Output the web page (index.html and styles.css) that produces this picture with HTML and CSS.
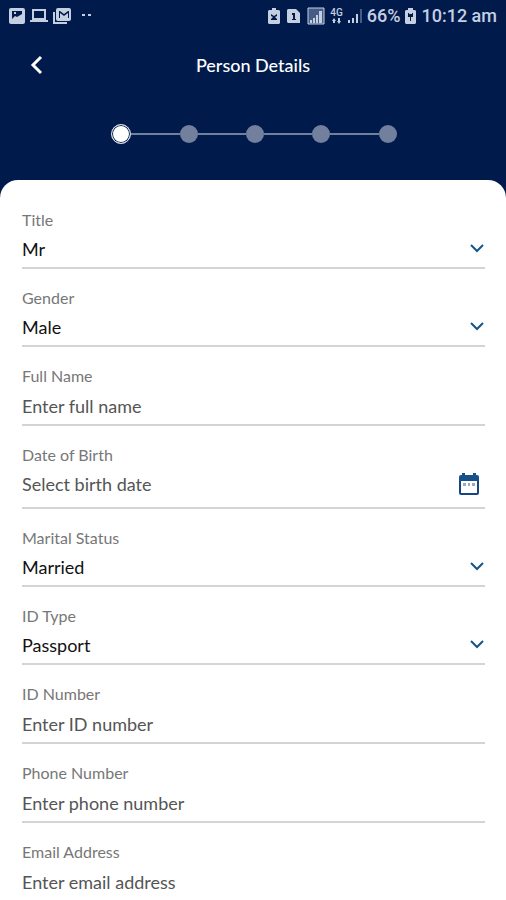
FILE: index.html
```html
<!DOCTYPE html>
<html lang="en">
<head>
<meta charset="utf-8">
<meta name="viewport" content="width=device-width, initial-scale=1">
<title>Person Details</title>
<link rel="stylesheet" href="styles.css">
</head>
<body>
<header class="top">
  <div class="status">
    <div class="status-group notices">
      <svg width="16" height="16" viewBox="0 0 16 16"><path fill="currentColor" fill-rule="evenodd" d="M2 0h12a2 2 0 0 1 2 2v12a2 2 0 0 1-2 2H2a2 2 0 0 1-2-2V2a2 2 0 0 1 2-2zM3 3v8l3-3 2 1 5-3V3zM5 4h2v2H5z"/></svg>
      <svg width="18" height="16" viewBox="0 0 18 16"><path fill="none" stroke="currentColor" stroke-width="2" d="M3 11V2h12v9zM0 13h18"/></svg>
      <svg width="18" height="16" viewBox="0 0 18 16"><path fill="none" stroke="currentColor" stroke-width="2" d="M1 4v11h13"/><path fill="currentColor" fill-rule="evenodd" d="M5 0h11a2 2 0 0 1 2 2v9a2 2 0 0 1-2 2H5a2 2 0 0 1-2-2V2a2 2 0 0 1 2-2zM6 3v7h1V5l4 3 4-3v5h1V3h-1l-4 3-4-3z"/></svg>
      <svg class="dots" width="12" height="16" viewBox="0 0 12 16"><path fill="currentColor" d="M0 6h3v2H0zM6 6h3v2H6z"/></svg>
    </div>
    <div class="status-group">
      <svg width="12" height="16" viewBox="0 0 12 16"><path fill="currentColor" fill-rule="evenodd" d="M4 0h4v2h3l1 1v12l-1 1H1l-1-1V3l1-1h3zM3 6v2l2 1-2 2v1h6v-1L7 9l2-1V6L6 8z"/></svg>
      <svg class="sim" width="13" height="16" viewBox="0 0 13 16"><path fill="currentColor" fill-rule="evenodd" d="M1 1h8l4 4v10H1l-1-1V2zM5 5v2h1v4H5v1h4v-1H8V5z"/></svg>
      <svg width="18" height="18" viewBox="0 0 18 18"><path fill="#465b86" stroke="currentColor" stroke-width="1" d="M1 1h16v16H1z"/><path fill="currentColor" d="M3 13h2v3H3zM6 11h2v5H6zM9 8h2v8H9zM12 4h3v12h-3z"/></svg>
      <span class="network"><span>4G</span><svg width="10" height="6" viewBox="0 0 10 6"><path fill="currentColor" d="M0 3l2-3 2 3H3v2H1V3zM5 3h1V0h2v3h1L7 6z"/></svg></span>
      <svg class="signal" width="14" height="16" viewBox="0 0 14 16"><path fill="currentColor" d="M0 12h2v3H0zM4 10h2v5H4zM8 6h2v9H8z"/><path fill="#465b86" d="M12 1h2v14h-2z"/></svg>
      <span>66%</span>
      <svg width="11" height="16" viewBox="0 0 11 16"><path fill="currentColor" fill-rule="evenodd" d="M3 0h5v2h2l1 1v12l-1 1H1l-1-1V3l1-1h2zM3 5v4h2v4h1V9h2V5H7v1H4V5z"/></svg>
      <time>10:12 am</time>
    </div>
  </div>
  <div class="title-bar">
    <button class="back" type="button" aria-label="Back">
      <svg width="14" height="20" viewBox="0 0 14 20"><path fill="none" stroke="currentColor" stroke-width="3" d="M12 2L4 10l8 8"/></svg>
    </button>
    <h1>Person Details</h1>
  </div>
  <ol class="steps" aria-label="Progress">
    <li class="step current" aria-current="step"></li>
    <li class="step"></li>
    <li class="step"></li>
    <li class="step"></li>
    <li class="step"></li>
  </ol>
</header>
<main class="card">
  <form>
    <div class="field">
      <label for="title">Title</label>
      <div class="control">
        <select id="title"><option>Mr</option></select>
        <svg class="chevron" width="16" height="10" viewBox="0 0 16 10"><path d="M2 1l6 6 6-6"/></svg>
      </div>
    </div>
    <div class="field">
      <label for="gender">Gender</label>
      <div class="control">
        <select id="gender"><option>Male</option></select>
        <svg class="chevron" width="16" height="10" viewBox="0 0 16 10"><path d="M2 1l6 6 6-6"/></svg>
      </div>
    </div>
    <div class="field">
      <label for="name">Full Name</label>
      <div class="control text"><input id="name" type="text" placeholder="Enter full name"></div>
    </div>
    <div class="field">
      <label for="birth">Date of Birth</label>
      <div class="control date">
        <input id="birth" type="text" placeholder="Select birth date">
        <button class="calendar" type="button" aria-label="Open calendar">
          <svg width="20" height="22" viewBox="0 0 20 22"><path fill="none" stroke="#17457f" stroke-width="2" d="M1 4v16q0 1 1 1h16q1 0 1-1V4"/><path fill="#17518a" d="M2 2h1V0h3v2h8V0h3v2h1q2 0 2 2v4H0V4q0-2 2-2z"/><path fill="#9aabc0" d="M4 10h3v3H4zM9 10h2v3H9zM13 10h3v3h-3z"/></svg>
        </button>
      </div>
    </div>
    <div class="field">
      <label for="marital">Marital Status</label>
      <div class="control">
        <select id="marital"><option>Married</option></select>
        <svg class="chevron" width="16" height="10" viewBox="0 0 16 10"><path d="M2 1l6 6 6-6"/></svg>
      </div>
    </div>
    <div class="field">
      <label for="id-type">ID Type</label>
      <div class="control">
        <select id="id-type"><option>Passport</option></select>
        <svg class="chevron" width="16" height="10" viewBox="0 0 16 10"><path d="M2 1l6 6 6-6"/></svg>
      </div>
    </div>
    <div class="field">
      <label for="id-number">ID Number</label>
      <div class="control text"><input id="id-number" type="text" placeholder="Enter ID number"></div>
    </div>
    <div class="field">
      <label for="phone">Phone Number</label>
      <div class="control text"><input id="phone" type="tel" placeholder="Enter phone number"></div>
    </div>
    <div class="field">
      <label for="email">Email Address</label>
      <div class="control text"><input id="email" type="email" placeholder="Enter email address"></div>
    </div>
  </form>
</main>
</body>
</html>
```
FILE: styles.css
```css
* {
  box-sizing: border-box;
}

body {
  margin: 0;
  background: #001b4b;
  font-family: Lato, "Liberation Sans", sans-serif;
}

svg {
  display: block;
  flex: none;
}

.top {
  color: #fff;
}

.status {
  display: flex;
  justify-content: space-between;
  align-items: center;
  height: 32px;
  padding: 0 9px;
  color: #c5cfe2;
  font: 500 18px/20px Roboto, sans-serif;
}

.status-group {
  display: flex;
  align-items: center;
  gap: 5px;
}

.sim {
  margin: 0 2px;
}

.dots {
  margin-left: 6px;
}

.network {
  display: flex;
  flex-direction: column;
  align-items: center;
  font-size: 10px;
  line-height: 10px;
}

.title-bar {
  display: grid;
  grid-template-columns: 72px 1fr 72px;
  align-items: center;
  height: 66px;
}

.title-bar h1 {
  margin: 0;
  font-size: 18px;
  line-height: 24px;
  font-weight: 500;
  text-align: center;
}

button {
  display: grid;
  place-items: center;
  padding: 0;
  border: 0;
  background: none;
  color: inherit;
}

.back {
  height: 48px;
}

.steps {
  display: flex;
  justify-content: space-between;
  align-items: center;
  height: 72px;
  margin: 0 calc(22% - 2px) 0 22%;
  padding: 0;
  list-style: none;
}

.step {
  flex: 1;
  display: flex;
  align-items: center;
}

.step:first-child {
  flex: none;
}

.step::after {
  content: "";
  width: 18px;
  height: 18px;
  border-radius: 50%;
  background: #72809d;
}

.step + .step::before {
  content: "";
  flex: 1;
  height: 2px;
  background: #72809d;
}

.step.current::after {
  border: 1px solid #d5dae5;
  background: #fff;
  box-shadow: inset 0 0 0 1px #001b4b;
}

.card {
  margin-top: 10px;
  padding: 11px 21px 0 22px;
  border-radius: 18px 18px 0 0;
  background: #fff;
}

.field {
  padding-top: 19px;
  border-bottom: 2px solid #d4d4d4;
}

.field:last-child {
  border-bottom: 0;
}

label {
  display: block;
  color: #777;
  font-size: 16px;
  line-height: 20px;
}

.control {
  display: flex;
  align-items: center;
  height: 37px;
}

.control.text {
  height: 38px;
  padding-top: 2px;
}

.control.date {
  height: 42px;
  padding-bottom: 4px;
}

select,
input {
  flex: 1;
  min-width: 0;
  height: 28px;
  margin: 0;
  padding: 0;
  border: 0;
  outline: 0;
  appearance: none;
  background: none;
  color: #111;
  font: 400 18px/28px Lato, "Liberation Sans", sans-serif;
}

input::placeholder {
  color: #555;
  opacity: 1;
}

.chevron {
  fill: none;
  stroke: #14568a;
  stroke-width: 2;
}

.calendar {
  margin-right: 6px;
}
```
